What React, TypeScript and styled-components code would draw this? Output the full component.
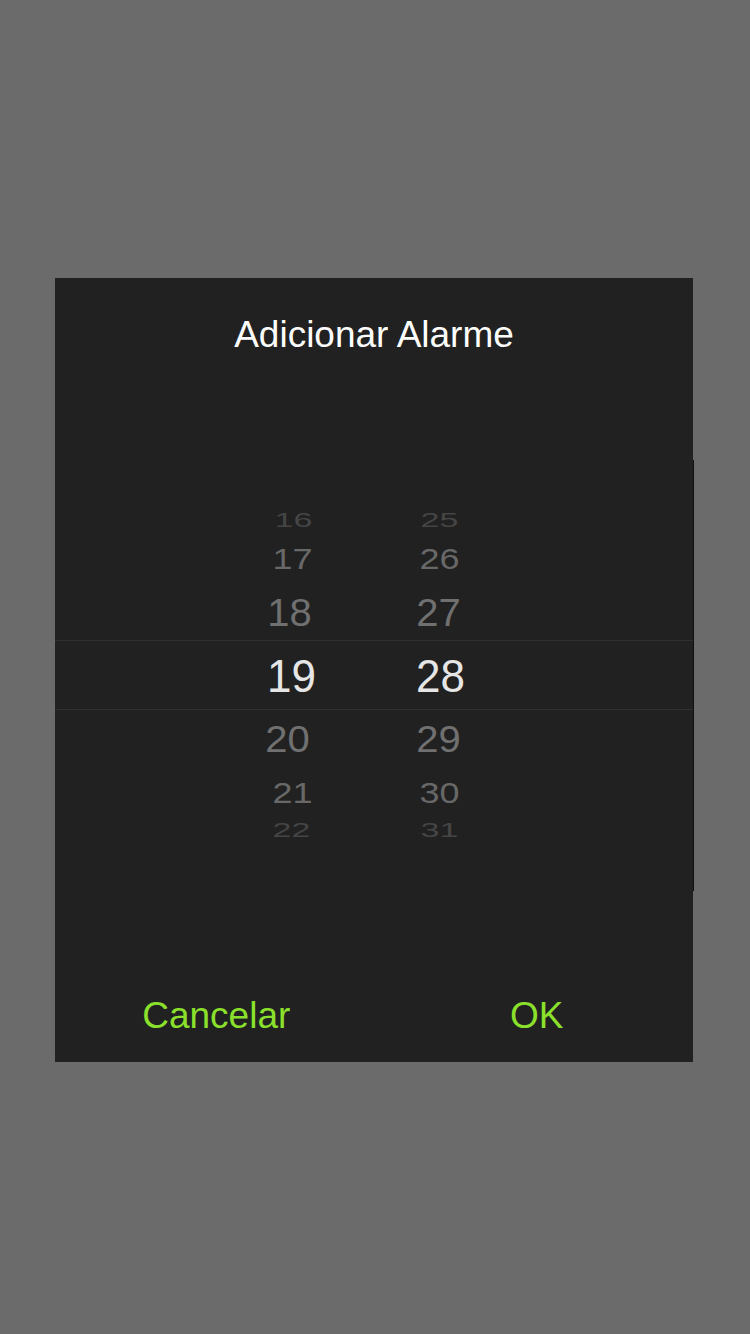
import React from "react";
import styled, { createGlobalStyle } from "styled-components";

const Global = createGlobalStyle`
  html, body {
    margin: 0;
    padding: 0;
    background: #6b6b6b;
    font-family: "Liberation Sans", Arial, Helvetica, sans-serif;
  }
  * { box-sizing: border-box; }
`;

const Screen = styled.div`
  width: 750px;
  height: 1334px;
  background: #6b6b6b;
  display: flex;
  flex-direction: column;
  align-items: flex-start;
  padding: 278px 0 0 55px;
`;

const Dialog = styled.div`
  width: 638px;
  height: 784px;
  background: #212121;
  display: flex;
  flex-direction: column;
`;

const Title = styled.h1`
  margin: 0;
  padding-top: 38px;
  font-size: 37px;
  line-height: 37px;
  font-weight: 400;
  color: #ffffff;
  text-align: center;
`;

const Picker = styled.div`
  position: relative;
  margin-top: 107px;
  margin-right: -1px;
  height: 431px;
  border-right: 1px solid #111111;
  display: flex;
  padding-left: 186px;
  overflow: hidden;
`;

const SelectionBand = styled.div`
  position: absolute;
  left: 0;
  right: 0;
  top: 180px;
  height: 70px;
  border-top: 1px solid #303030;
  border-bottom: 1px solid #303030;
  pointer-events: none;
`;

const Wheel = styled.div<{ $gap?: number }>`
  width: 101px;
  margin-right: ${(p) => p.$gap ?? 0}px;
  display: flex;
  flex-direction: column;
  align-items: center;
  padding-top: 45px;
`;

const Row = styled.div<{ $h: number }>`
  height: ${(p) => p.$h}px;
  width: 100%;
  display: flex;
  align-items: center;
  justify-content: center;
`;

const Digit = styled.span<{ $size: number; $scale: number; $color: string; $dx: number }>`
  display: block;
  font-size: ${(p) => p.$size}px;
  line-height: 1;
  color: ${(p) => p.$color};
  transform: translateX(${(p) => p.$dx}px) scaleY(${(p) => p.$scale});
  letter-spacing: 0;
`;

const ButtonRow = styled.div`
  margin-top: auto;
  display: flex;
  padding: 0 0 28px 5px;
`;

const Button = styled.button<{ $nudge?: number }>`
  flex: 1;
  background: none;
  border: none;
  padding: 0 0 0 ${(p) => p.$nudge ?? 0}px;
  font-family: "Liberation Sans", Arial, Helvetica, sans-serif;
  font-size: 37px;
  line-height: 37px;
  color: #8be02c;
  text-align: center;
  cursor: pointer;
`;

type RowSpec = { h: number; size: number; scale: number; color: string };

const rows: RowSpec[] = [
  { h: 30, size: 34, scale: 0.58, color: "#454545" },
  { h: 47, size: 36, scale: 0.8, color: "#686868" },
  { h: 60, size: 40, scale: 0.97, color: "#707070" },
  { h: 67, size: 44, scale: 1.05, color: "#e6e6e6" },
  { h: 59, size: 40, scale: 0.94, color: "#707070" },
  { h: 49, size: 36, scale: 0.8, color: "#686868" },
  { h: 26, size: 34, scale: 0.58, color: "#454545" },
];

const hourOffsets = [2, 1, -2, 0, -4, 1, 0];
const minOffsets = [0, 0, -1, 1, -1, 0, 0];

const hours = ["16", "17", "18", "19", "20", "21", "22"];
const minutes = ["25", "26", "27", "28", "29", "30", "31"];

function WheelColumn({ values, offsets, gap }: { values: string[]; offsets: number[]; gap?: number }) {
  return (
    <Wheel $gap={gap}>
      {values.map((v, i) => (
        <Row key={v} $h={rows[i].h}>
          <Digit $size={rows[i].size} $scale={rows[i].scale} $color={rows[i].color} $dx={offsets[i]}>
            {v}
          </Digit>
        </Row>
      ))}
    </Wheel>
  );
}

export default function App() {
  return (
    <>
      <Global />
      <Screen>
        <Dialog>
          <Title>Adicionar Alarme</Title>
          <Picker>
            <SelectionBand />
            <WheelColumn values={hours} offsets={hourOffsets} gap={47} />
            <WheelColumn values={minutes} offsets={minOffsets} />
          </Picker>
          <ButtonRow>
            <Button>Cancelar</Button>
            <Button $nudge={8}>OK</Button>
          </ButtonRow>
        </Dialog>
      </Screen>
    </>
  );
}
